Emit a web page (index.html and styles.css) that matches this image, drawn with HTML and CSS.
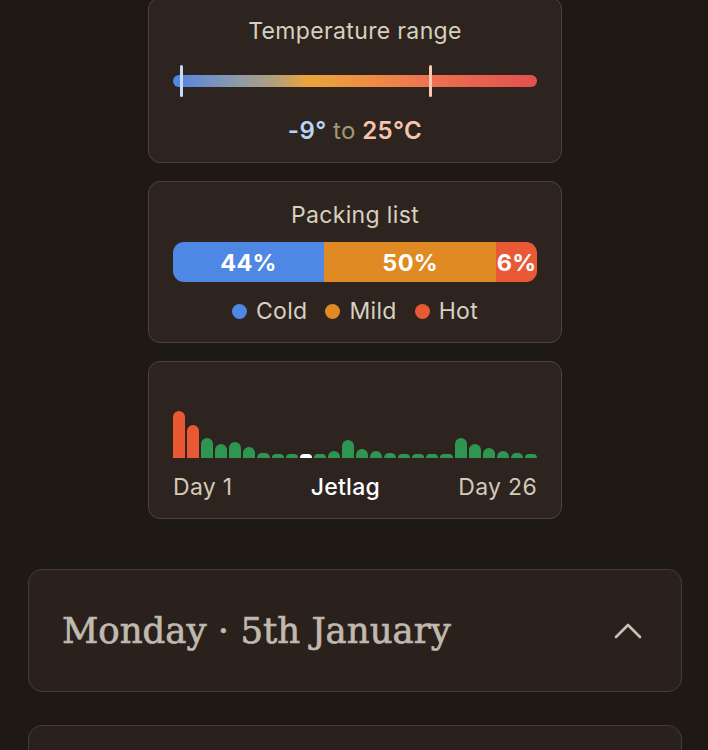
FILE: index.html
```html
<!DOCTYPE html>
<html>
<head>
<meta charset="utf-8">
<link rel="stylesheet" href="styles.css">
</head>
<body>
<div class="page">
  <div class="stats">
    <section class="card temp">
      <h3 class="card-title">Temperature range</h3>
      <div class="track">
        <div class="track-bar"></div>
        <span class="marker marker-low" style="left: 2.2%"></span>
        <span class="marker marker-high" style="left: 70.6%"></span>
      </div>
      <p class="temp-values"><span class="low">-9°</span> <span class="to">to</span> <span class="high">25°C</span></p>
    </section>

    <section class="card packing">
      <h3 class="card-title">Packing list</h3>
      <div class="stack">
        <div class="seg seg-cold" style="width: 41.5%">44%</div>
        <div class="seg seg-mild" style="width: 47.3%">50%</div>
        <div class="seg seg-hot" style="width: 11.2%">6%</div>
      </div>
      <ul class="legend">
        <li><span class="dot dot-cold"></span>Cold</li>
        <li><span class="dot dot-mild"></span>Mild</li>
        <li><span class="dot dot-hot"></span>Hot</li>
      </ul>
    </section>

    <section class="card jetlag">
      <div class="chart">
        <span class="bar bar-red" style="height:47px"></span>
        <span class="bar bar-red" style="height:33px"></span>
        <span class="bar" style="height:20px"></span>
        <span class="bar" style="height:14px"></span>
        <span class="bar" style="height:16px"></span>
        <span class="bar" style="height:11px"></span>
        <span class="bar" style="height:5px"></span>
        <span class="bar" style="height:4px"></span>
        <span class="bar" style="height:4px"></span>
        <span class="bar bar-today" style="height:4px"></span>
        <span class="bar" style="height:4px"></span>
        <span class="bar" style="height:7px"></span>
        <span class="bar" style="height:18px"></span>
        <span class="bar" style="height:9px"></span>
        <span class="bar" style="height:7px"></span>
        <span class="bar" style="height:5px"></span>
        <span class="bar" style="height:4px"></span>
        <span class="bar" style="height:4px"></span>
        <span class="bar" style="height:4px"></span>
        <span class="bar" style="height:4px"></span>
        <span class="bar" style="height:20px"></span>
        <span class="bar" style="height:14px"></span>
        <span class="bar" style="height:10px"></span>
        <span class="bar" style="height:7px"></span>
        <span class="bar" style="height:5px"></span>
        <span class="bar" style="height:4px"></span>
      </div>
      <div class="chart-labels">
        <span>Day 1</span>
        <span class="label-mid">Jetlag</span>
        <span>Day 26</span>
      </div>
    </section>
  </div>

  <section class="day-card">
    <h2 class="day-title">Monday · 5th January</h2>
    <svg class="chevron" width="30" height="20" viewBox="0 0 30 20" aria-hidden="true">
      <polyline points="3,16 15,4 27,16" fill="none" stroke="#c7c0b7" stroke-width="2.6" stroke-linecap="round" stroke-linejoin="round"/>
    </svg>
  </section>

  <section class="day-card day-card-next"></section>
</div>
</body>
</html>
```

FILE: styles.css
```css
* { box-sizing: border-box; }

html, body {
  margin: 0;
  padding: 0;
  background: #1e1915;
}

body {
  font-family: Inter, "Noto Sans", "Liberation Sans", sans-serif;
  color: #d8d0bf;
  overflow: hidden;
}

.page {
  width: 708px;
  padding: 0 26px 0 28px;
  margin-top: -3px;
}

.stats {
  width: 414px;
  margin: 0 auto 0 120px;
  display: flex;
  flex-direction: column;
  gap: 18px;
}

.card {
  background: #2d2420;
  border: 1.5px solid #4d4138;
  border-radius: 12px;
  padding: 20px 24px 18px;
}

.card-title {
  margin: 0;
  font-size: 23px;
  line-height: 26px;
  font-weight: 400;
  letter-spacing: 0.35px;
  text-align: center;
  color: #d8d0bf;
}

/* Temperature */
.track {
  position: relative;
  height: 32px;
  margin-top: 21px;
  display: flex;
  align-items: center;
}

.track-bar {
  width: 100%;
  height: 12px;
  border-radius: 6px;
  background: linear-gradient(to right, #4f86e6 0%, #8f99a8 18%, #b39f7a 28%, #eaa53a 37%, #ee8f43 52%, #ef7550 68%, #e8604f 85%, #e2504f 100%);
}

.marker {
  position: absolute;
  top: 0;
  width: 3px;
  height: 32px;
  border-radius: 2px;
  transform: translateX(-1px);
}

.marker-low { background: #c4dbfa; }
.marker-high { background: #fcc8b0; }

.temp-values {
  margin: 21px 0 0;
  text-align: center;
  font-size: 24px;
  line-height: 26px;
  font-weight: 600;
  letter-spacing: 0.4px;
}

.temp-values .low { color: #b9d3f7; }
.temp-values .to { color: #a09a73; font-weight: 400; }
.temp-values .high { color: #f9c4ab; }

/* Packing */
.stack {
  display: flex;
  height: 40px;
  margin-top: 14px;
  border-radius: 11px;
  overflow: hidden;
}

.seg {
  display: flex;
  align-items: center;
  justify-content: center;
  color: #fff;
  font-size: 23.5px;
  font-weight: 700;
  letter-spacing: 0.3px;
}

.seg-cold { background: #4f87e4; }
.seg-mild { background: #e08a23; }
.seg-hot { background: #e75a35; }

.legend {
  list-style: none;
  margin: 16px 0 0;
  padding: 0;
  display: flex;
  justify-content: center;
  gap: 18px;
  font-size: 23px;
  line-height: 26px;
  letter-spacing: 0.3px;
  color: #d8d0c0;
}

.legend li {
  display: flex;
  align-items: center;
  gap: 9px;
}

.dot {
  width: 15px;
  height: 15px;
  border-radius: 50%;
}

.dot-cold { background: #4f87e4; }
.dot-mild { background: #e08a23; }
.dot-hot { background: #e75a35; }

/* Jetlag chart */
.chart {
  height: 76px;
  display: flex;
  align-items: flex-end;
  gap: 2px;
}

.bar {
  flex: 1;
  background: #2f9651;
  border-radius: 6px 6px 0 0;
}

.bar-red { background: #ea5733; }
.bar-today { background: #ffffff; }

.chart-labels {
  display: flex;
  justify-content: space-between;
  margin-top: 16px;
  font-size: 23px;
  line-height: 26px;
  letter-spacing: 0.3px;
  color: #d2c9b8;
}

.chart-labels .label-mid {
  color: #ffffff;
  font-weight: 500;
}

/* Day cards */
.day-card {
  width: 654px;
  height: 123px;
  margin-top: 50px;
  background: #2a211c;
  border: 1.5px solid #473c34;
  border-radius: 14px;
  display: flex;
  align-items: center;
  justify-content: space-between;
  padding: 0 38px 0 33px;
}

.day-title {
  margin: 0;
  font-family: "DejaVu Serif", "Liberation Serif", serif;
  font-weight: 400;
  font-size: 35.5px;
  line-height: 40px;
  color: #c0b9b0;
  letter-spacing: 0;
  -webkit-text-stroke: 0.7px #c0b9b0;
}

.chevron {
  display: block;
}

.day-card-next {
  margin-top: 33px;
}
```
